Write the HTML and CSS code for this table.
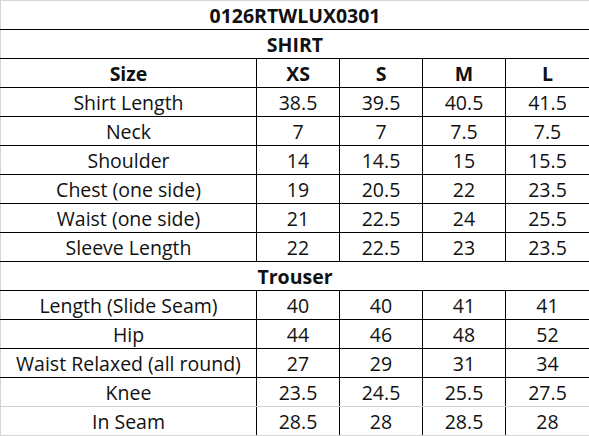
FILE: index.html
```html
<!DOCTYPE html>
<html>
<head>
<meta charset="utf-8">
<link rel="stylesheet" href="styles.css">
</head>
<body>
<table class="size-table">
  <colgroup>
    <col class="c-label">
    <col class="c-size">
    <col class="c-size">
    <col class="c-size">
    <col class="c-size-last">
  </colgroup>
  <tr class="title"><td colspan="5">0126RTWLUX0301</td></tr>
  <tr class="section"><td colspan="5">SHIRT</td></tr>
  <tr class="head"><td>Size</td><td>XS</td><td>S</td><td>M</td><td>L</td></tr>
  <tr><td>Shirt Length</td><td>38.5</td><td>39.5</td><td>40.5</td><td>41.5</td></tr>
  <tr><td>Neck</td><td>7</td><td>7</td><td>7.5</td><td>7.5</td></tr>
  <tr><td>Shoulder</td><td>14</td><td>14.5</td><td>15</td><td>15.5</td></tr>
  <tr><td>Chest (one side)</td><td>19</td><td>20.5</td><td>22</td><td>23.5</td></tr>
  <tr><td>Waist (one side)</td><td>21</td><td>22.5</td><td>24</td><td>25.5</td></tr>
  <tr><td>Sleeve Length</td><td>22</td><td>22.5</td><td>23</td><td>23.5</td></tr>
  <tr class="section"><td colspan="5">Trouser</td></tr>
  <tr><td>Length (Slide Seam)</td><td>40</td><td>40</td><td>41</td><td>41</td></tr>
  <tr><td>Hip</td><td>44</td><td>46</td><td>48</td><td>52</td></tr>
  <tr><td>Waist Relaxed (all round)</td><td>27</td><td>29</td><td>31</td><td>34</td></tr>
  <tr class="pre-last"><td>Knee</td><td>23.5</td><td>24.5</td><td>25.5</td><td>27.5</td></tr>
  <tr class="last"><td>In Seam</td><td>28.5</td><td>28</td><td>28.5</td><td>28</td></tr>
</table>
</body>
</html>
```
FILE: styles.css
```css
html, body {
  margin: 0;
  padding: 0;
  background: #fff;
}
.size-table {
  border-collapse: collapse;
  table-layout: fixed;
  width: 589px;
  font-family: "Open Sans", "Liberation Sans", sans-serif;
  font-size: 19.5px;
  color: #111;
}
.c-label { width: 256px; }
.c-size { width: 83px; }
.c-size-last { width: 84px; }
.size-table td {
  height: 26px;
  padding: 2px 0 0;
  text-align: center;
  vertical-align: middle;
  line-height: 26px;
  border: 1px solid #000;
  white-space: nowrap;
  overflow: hidden;
}
.size-table tr:first-child td {
  border-top: 1px solid #d6d6d6;
}
.size-table td:first-child {
  border-left: 1px solid #d6d6d6;
}
.title td,
.section td,
.head td {
  font-weight: 700;
}
.pre-last td {
  border-bottom: 1px solid #d0d0d0;
}
.last td {
  border-bottom: 1px solid #d6d6d6;
}
```
